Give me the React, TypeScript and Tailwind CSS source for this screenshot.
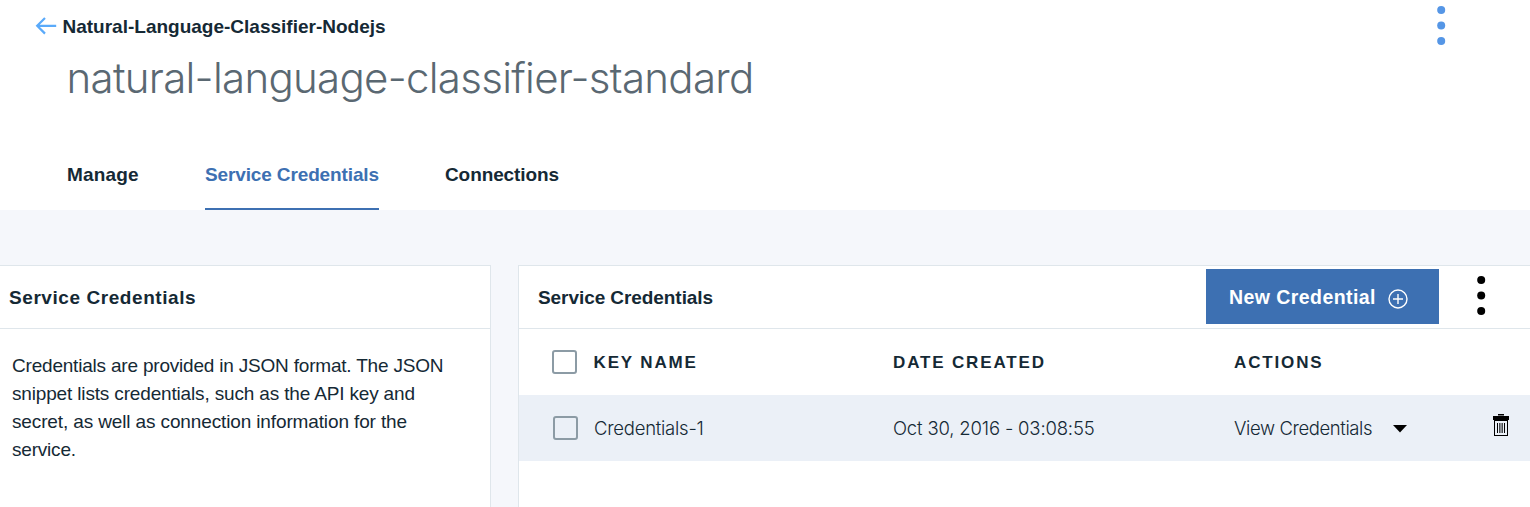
import type { ReactNode } from "react";

function KebabIcon({ className }: { className: string }) {
  return (
    <svg width="10" height="40" viewBox="0 0 10 40" fill="currentColor" className={className}>
      <circle cx="5.2" cy="4" r="4" />
      <circle cx="5.2" cy="19.5" r="4" />
      <circle cx="5.2" cy="35" r="4" />
    </svg>
  );
}

function BackArrow() {
  return (
    <svg width="22" height="18" viewBox="0 0 22 18" fill="none" stroke="#5aaafa" strokeWidth="2.2" className="shrink-0">
      <path d="M21.2 8.8H2.4M10 1L2.2 8.8l7.8 7.8" />
    </svg>
  );
}

function PlusCircle() {
  return (
    <svg width="20" height="20" viewBox="0 0 20 20" fill="none" stroke="white" strokeWidth="1.4">
      <circle cx="10" cy="10" r="9" />
      <path d="M10 5v10M5 10h10" />
    </svg>
  );
}

function TrashIcon() {
  return (
    <svg width="16" height="22" viewBox="0 0 16 22" fill="black">
      <rect x="5" y="0" width="6" height="1.5" />
      <rect x="0" y="2" width="16" height="4" />
      <path fillRule="evenodd" d="M1 5h14v17H1zM2 7v14h12V7z" />
      <path d="M4 9h1v10H4zM11 9h1v10h-1z" />
      <path d="M6 9h4v10H6z" fill="#8b8f94" />
      <path d="M6 9h1v10H6zM9 9h1v10H9z" fill="#4a4d50" />
    </svg>
  );
}

function Checkbox({ label }: { label: string }) {
  return (
    <input
      type="checkbox"
      aria-label={label}
      className="h-6 w-[25px] shrink-0 appearance-none rounded-[3px] border-2 border-[#8c9ba5]"
    />
  );
}

function ColumnTitle({ children }: { children: ReactNode }) {
  return <span className="pt-[2px] text-[17px] font-bold tracking-[1.85px]">{children}</span>;
}

function Cell({ children, className }: { children: ReactNode; className: string }) {
  return <span className={`pt-[2px] font-['Inter',sans-serif] text-[18.5px] font-light ${className}`}>{children}</span>;
}

export default function App() {
  return (
    <div className="flex h-[507px] flex-col overflow-hidden bg-[#f5f7fb] font-['Liberation_Sans',Arial,sans-serif] text-[19px] whitespace-nowrap text-[#152935]">
      <header className="flex h-[210px] shrink-0 flex-col bg-white">
        <div className="flex h-[52px] items-center justify-between pr-[84px] pl-[35px]">
          <a className="flex items-center gap-[5.5px] font-bold">
            <BackArrow />
            <span className="pt-[2px]">Natural-Language-Classifier-Nodejs</span>
          </a>
          <KebabIcon className="text-[#5596e6]" />
        </div>
        <h1 className="pl-[66.5px] font-['Inter',sans-serif] text-[42px] leading-[52px] font-light tracking-[-0.7px] text-[#5a6872]">
          natural-language-classifier-standard
        </h1>
        <nav className="mt-auto flex gap-[66px] pl-[67px] leading-[22px] font-bold">
          <a className="w-[72px] pb-6 tracking-[0.15px]">Manage</a>
          <a className="w-[174px] border-b-2 border-[#3d70b2] pb-[22px] tracking-[-0.13px] text-[#3d70b2]">
            Service Credentials
          </a>
          <a className="pb-6 tracking-[-0.1px]">Connections</a>
        </nav>
      </header>

      <main className="flex flex-1 gap-[27px] pt-[55px]">
        <aside className="flex w-[491px] shrink-0 flex-col border-t border-r border-[#dfe6eb] bg-white">
          <h2 className="flex h-[63px] items-center border-b border-[#dfe6eb] pt-[2px] pl-[9px] font-bold tracking-[0.57px]">
            Service Credentials
          </h2>
          <p className="pt-[23px] pl-3 leading-[28px] tracking-[-0.2px]">
            Credentials are provided in JSON format. The JSON
            <br />
            <span className="tracking-[-0.16px]">snippet lists credentials, such as the API key and</span>
            <br />
            <span className="tracking-[-0.13px]">secret, as well as connection information for the</span>
            <br />
            service.
          </p>
        </aside>

        <section className="flex flex-1 flex-col border-t border-l border-[#dfe6eb] bg-white">
          <div className="flex h-[63px] items-center border-b border-[#dfe6eb] pr-[44px] pl-[19px]">
            <h2 className="flex-1 pt-[2px] font-bold tracking-[-0.07px]">Service Credentials</h2>
            <button className="mt-[-1px] flex h-[55px] w-[233px] items-center gap-3 bg-[#3d70b2] pl-[23px] text-[19.5px] font-bold tracking-[0.43px] text-white">
              <span className="pt-[2px]">New Credential</span>
              <span className="pt-[5px]">
                <PlusCircle />
              </span>
            </button>
            <KebabIcon className="mt-[-3px] ml-[37px] text-black" />
          </div>

          <div className="grid h-[66px] grid-cols-[341px_341px_1fr] items-center pl-[33px]">
            <div className="flex items-center gap-[16.5px]">
              <Checkbox label="Select all" />
              <ColumnTitle>KEY NAME</ColumnTitle>
            </div>
            <ColumnTitle>DATE CREATED</ColumnTitle>
            <ColumnTitle>ACTIONS</ColumnTitle>
          </div>

          <div className="grid h-[66px] grid-cols-[340px_341px_1fr] items-center bg-[#ebf0f7] pl-[34px]">
            <div className="flex items-center gap-4">
              <Checkbox label="Select Credentials-1" />
              <Cell className="tracking-[-0.25px]">Credentials-1</Cell>
            </div>
            <Cell className="tracking-[-0.17px]">Oct 30, 2016 - 03:08:55</Cell>
            <div className="flex items-center pr-[21px]">
              <Cell className="w-[159px] tracking-[-0.4px]">View Credentials</Cell>
              <svg width="14" height="8" viewBox="0 0 14 8" className="mt-[2px]">
                <path d="M0 0h14L7 7.5z" />
              </svg>
              <span className="mt-[-6px] ml-auto">
                <TrashIcon />
              </span>
            </div>
          </div>
        </section>
      </main>
    </div>
  );
}
